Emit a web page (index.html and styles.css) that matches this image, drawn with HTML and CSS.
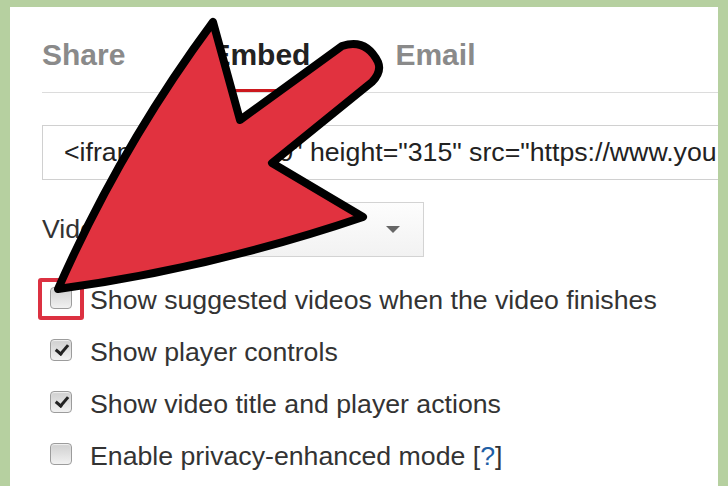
FILE: index.html
```html
<!DOCTYPE html>
<html lang="en">
<head>
  <meta charset="UTF-8" />
  <title>Share - Embed options</title>
  <link rel="stylesheet" href="styles.css">
</head>
<body>
  <div class="frame">
    <div class="panel">
      <div class="tabs">
        <span class="tab">Share</span>
        <span class="tab active">Embed</span>
        <span class="tab">Email</span>
      </div>

      <div class="code">&lt;iframe width="560" height="315" src="https://www.you</div>

      <div class="size-row">
        <span class="size-label">Video size:</span>
        <div class="select">
          <span>Custom size</span>
          <span class="caret"></span>
        </div>
      </div>

      <ul class="options">
        <li><span class="box"><span class="mark"></span></span>Show suggested videos when the video finishes</li>
        <li><span class="box checked"></span>Show player controls</li>
        <li><span class="box checked"></span>Show video title and player actions</li>
        <li><span class="box"></span>Enable privacy-enhanced mode [<a href="#">?</a>]</li>
      </ul>
    </div>

    <!-- pointer arrow drawn over the panel -->
    <svg class="arrow" width="728" height="486" viewBox="0 0 728 486">
      <path d="M58 289 Q121 146 213 22 L240 120 L342 46 Q366 38 378 62 Q382 72 372 82 L272 163 L363 217 Q213 268 58 289 Z"
            fill="#e1323f" stroke="#000" stroke-width="8" stroke-linejoin="round"/>
    </svg>
  </div>
</body>
</html>
```

FILE: styles.css
```css
 body {
   margin: 0;
   font-family: 'Liberation Sans', Arial, sans-serif;
   background: #b6d0a0;
   overflow: hidden;
 }
 .frame {
   position: relative;
   width: 728px;
   height: 486px;
   overflow: hidden;
 }
 .panel {
   margin: 7px 0 0 10px;
   width: 708px;
   height: 479px;
   box-sizing: border-box;
   background: #fff;
   padding: 30px 0 0 32px;
   overflow: hidden;
   color: #333;
 }

 .tabs {
   display: flex;
   gap: 85px;
   border-bottom: 1px solid #dcdcdc;
 }
 .tab {
   font-size: 30px;
   font-weight: bold;
   line-height: 36px;
   color: #8a8a8a;
   padding-bottom: 16px;
   border-bottom: 3px solid transparent;
 }
 .tab.active {
   color: #222;
   border-bottom-color: #cc181e;
 }

 .code {
   margin-top: 32px;
   width: 700px;
   height: 55px;
   box-sizing: border-box;
   border: 1px solid #d0d0d0;
   border-right: none;
   padding-left: 21px;
   font-size: 26.7px;
   line-height: 53px;
   color: #222;
   white-space: nowrap;
   overflow: hidden;
 }

 .size-row {
   display: flex;
   align-items: center;
   margin-top: 22px;
   font-size: 26.7px;
 }
 .select {
   display: flex;
   align-items: center;
   justify-content: space-between;
   margin-left: 12px;
   width: 240px;
   height: 55px;
   box-sizing: border-box;
   padding: 0 23px 0 10px;
   border: 1px solid #d3d3d3;
   background: linear-gradient(#fdfdfd, #f2f2f2);
   font-size: 22px;
 }
 .caret {
   width: 0;
   height: 0;
   border-left: 7px solid transparent;
   border-right: 7px solid transparent;
   border-top: 7px solid #666;
 }

 .options {
   list-style: none;
   margin: 17px 0 0;
   padding: 0 0 0 8px;
 }
 .options li {
   display: flex;
   align-items: center;
   height: 52px;
   font-size: 26.7px;
   color: #333;
 }
 .options a {
   color: #1f5fa6;
   text-decoration: none;
 }
 .box {
   position: relative;
   width: 22px;
   height: 22px;
   box-sizing: border-box;
   margin: -4px 18px 0 0;
   border: 1px solid #9c9c9c;
   border-radius: 4px;
   background: linear-gradient(#cfcfcf, #f1f1f1);
   box-shadow: inset 0 1px 1px rgba(255,255,255,0.7);
 }
 .box.checked::after {
   content: "";
   position: absolute;
   left: 7px;
   top: 2px;
   width: 5px;
   height: 10px;
   border: solid #222;
   border-width: 0 3px 3px 0;
   transform: rotate(40deg);
 }
 .mark {
   position: absolute;
   left: -13px;
   top: -10px;
   width: 46px;
   height: 42px;
   box-sizing: border-box;
   border: 4px solid #dc3141;
   border-radius: 3px;
 }

 .arrow {
   position: absolute;
   left: 0;
   top: 0;
 }
```
